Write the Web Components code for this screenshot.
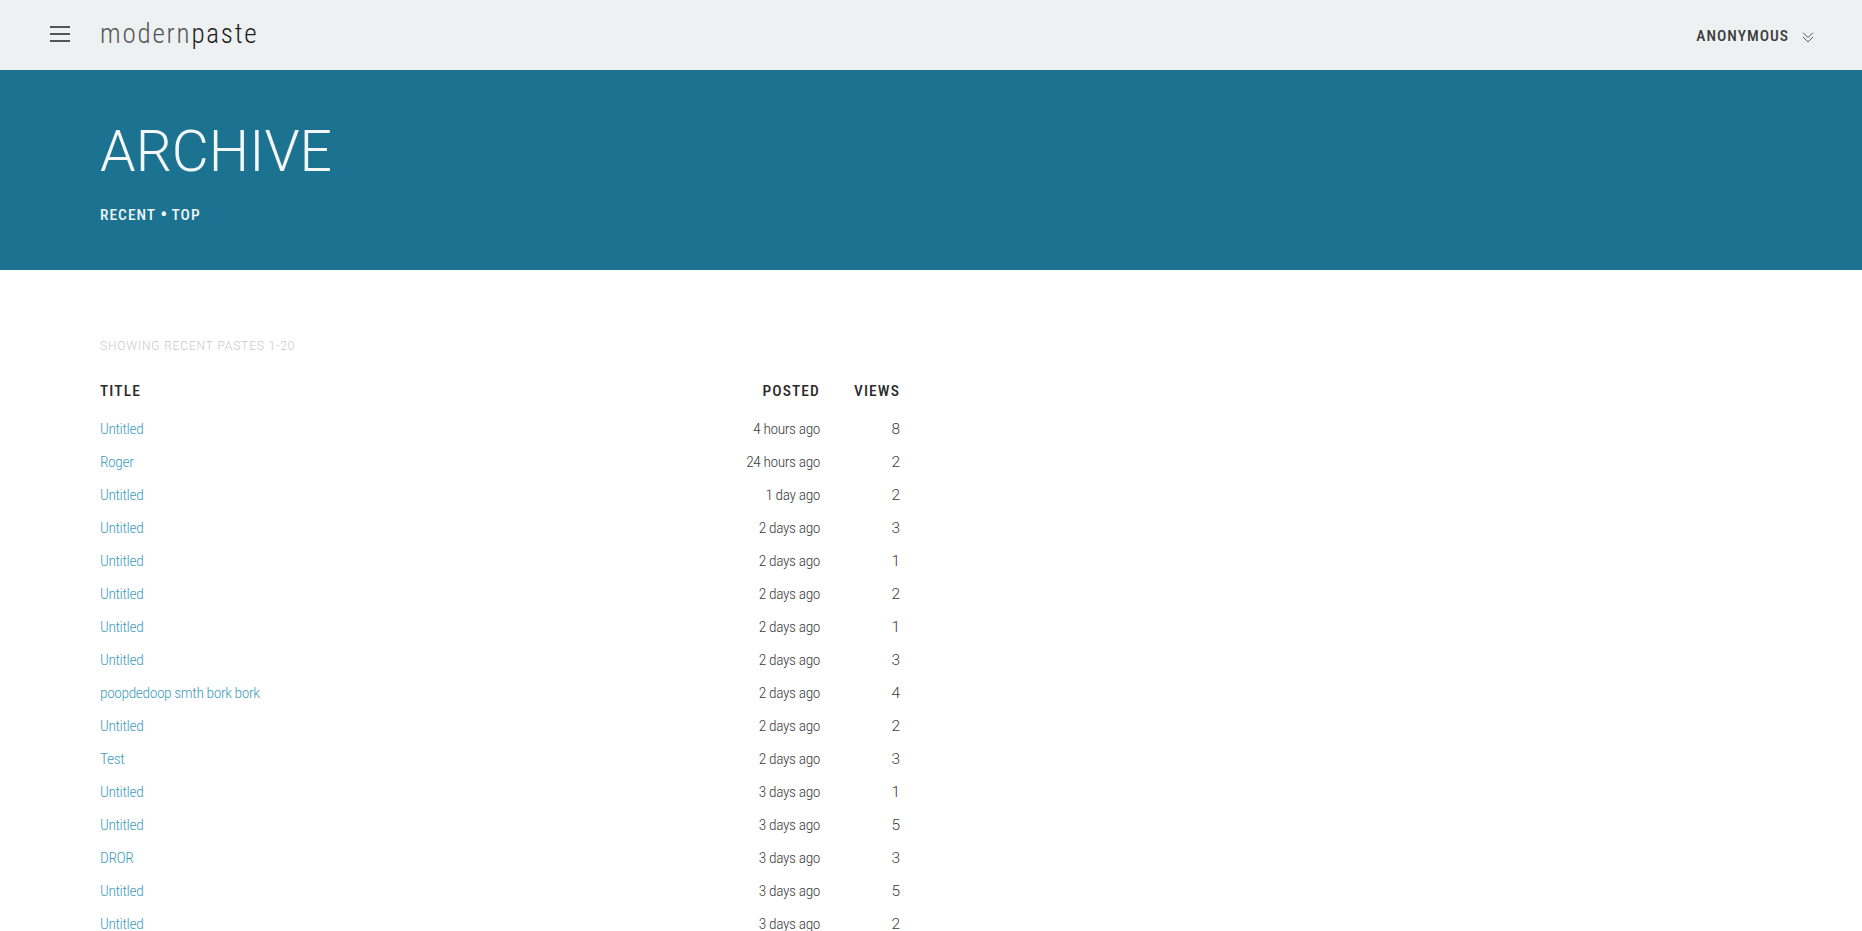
<!DOCTYPE html>
<html>
<head>
<meta charset="utf-8">
<title>ModernPaste</title>
<style>
  html, body { margin: 0; padding: 0; height: 100%; overflow: hidden; background: #fff; }
  body { font-family: Roboto, "Liberation Sans", sans-serif; }
</style>
</head>
<body>
<mp-header></mp-header>
<mp-hero heading="Archive">
  <a href="#">Recent</a> <b>•</b> <a href="#">Top</a>
</mp-hero>
<mp-archive caption="Showing recent pastes 1-20">
  <mp-row title="Untitled" posted="4 hours ago" views="8"></mp-row>
  <mp-row title="Roger" posted="24 hours ago" views="2"></mp-row>
  <mp-row title="Untitled" posted="1 day ago" views="2"></mp-row>
  <mp-row title="Untitled" posted="2 days ago" views="3"></mp-row>
  <mp-row title="Untitled" posted="2 days ago" views="1"></mp-row>
  <mp-row title="Untitled" posted="2 days ago" views="2"></mp-row>
  <mp-row title="Untitled" posted="2 days ago" views="1"></mp-row>
  <mp-row title="Untitled" posted="2 days ago" views="3"></mp-row>
  <mp-row title="poopdedoop smth bork bork" posted="2 days ago" views="4"></mp-row>
  <mp-row title="Untitled" posted="2 days ago" views="2"></mp-row>
  <mp-row title="Test" posted="2 days ago" views="3"></mp-row>
  <mp-row title="Untitled" posted="3 days ago" views="1"></mp-row>
  <mp-row title="Untitled" posted="3 days ago" views="5"></mp-row>
  <mp-row title="DROR" posted="3 days ago" views="3"></mp-row>
  <mp-row title="Untitled" posted="3 days ago" views="5"></mp-row>
  <mp-row title="Untitled" posted="3 days ago" views="2"></mp-row>
</mp-archive>

<script>
/* Barra superior: menu, logo y usuario */
class MpHeader extends HTMLElement {
  constructor() {
    super();
    this.attachShadow({ mode: 'open' });
  }

  connectedCallback() {
    this.shadowRoot.innerHTML = `
      <style>
        :host {
          display: flex;
          align-items: center;
          height: 70px;
          background: #eef1f2;
          color: #333;
          padding: 0 48px 0 50px;
          box-sizing: border-box;
        }
        .menu { display: block; width: 20px; height: 16px; margin-right: 30px; margin-top: -2px; }
        .logo {
          font-size: 27px;
          font-weight: 300;
          letter-spacing: 1.8px;
          color: #555;
          line-height: 1;
          position: relative;
          top: -1px;
          font-stretch: 85%;
        }
        .logo b { font-weight: 300; color: #1c1c1c; }
        .user {
          margin-left: auto;
          display: flex;
          align-items: center;
          font-size: 15.5px;
          font-weight: 500;
          font-stretch: 85%;
          letter-spacing: 1px;
          color: #3c3c3c;
          margin-top: 2px;
        }
        .user svg { display: block; width: 12px; height: 11px; margin-left: 13px; margin-top: 2px; }
      </style>
      <svg class="menu" viewBox="0 0 20 16">
        <path d="M0 1h20M0 8h20M0 15h20" stroke="#222" stroke-width="1.4" fill="none"/>
      </svg>
      <span class="logo">modern<b>paste</b></span>
      <span class="user">ANONYMOUS
        <svg viewBox="0 0 12 11">
          <path d="M1 .6l5 5 5-5M1 5l5 5 5-5" stroke="#333" stroke-width=".8" fill="none"/>
        </svg>
      </span>
    `;
  }
}

/* Banda azul con el titulo de la pagina */
class MpHero extends HTMLElement {
  constructor() {
    super();
    this.attachShadow({ mode: 'open' });
  }

  connectedCallback() {
    const heading = this.getAttribute('heading') || '';
    this.shadowRoot.innerHTML = `
      <style>
        :host {
          display: block;
          height: 200px;
          background: #1c7391;
          color: #f4f7f8;
          padding: 0 100px;
          box-sizing: border-box;
          overflow: hidden;
        }
        h1 {
          margin: 0;
          padding-top: 49px;
          font-size: 57px;
          font-weight: 300;
          line-height: 66px;
          text-transform: uppercase;
        }
        nav {
          margin-top: 19px;
          font-size: 15.5px;
          font-weight: 500;
          font-stretch: 85%;
          letter-spacing: 1px;
          line-height: 20px;
          text-transform: uppercase;
          color: #eef4f6;
        }
        ::slotted(a) { color: inherit; text-decoration: none; }
        ::slotted(b) { font-size: 20px; font-weight: 500; letter-spacing: 0; line-height: 1; vertical-align: -1px; }
      </style>
      <h1>${heading}</h1>
      <nav><slot></slot></nav>
    `;
  }
}

/* Tabla del archivo; las filas llegan por el slot */
class MpArchive extends HTMLElement {
  constructor() {
    super();
    this.attachShadow({ mode: 'open' });
  }

  connectedCallback() {
    const caption = this.getAttribute('caption') || '';
    this.shadowRoot.innerHTML = `
      <style>
        :host {
          display: block;
          width: 800px;
          margin-left: 100px;
          padding-top: 68px;
        }
        .caption {
          font-size: 12px;
          font-weight: 300;
          line-height: 16px;
          letter-spacing: .85px;
          text-transform: uppercase;
          color: #c9c9c9;
          margin-bottom: 21px;
        }
        .head {
          display: grid;
          grid-template-columns: 1fr 120px 80px;
          font-size: 15.5px;
          font-weight: 500;
          font-stretch: 85%;
          line-height: 33px;
          letter-spacing: 1.1px;
          text-transform: uppercase;
          color: #2c2c2c;
          margin-bottom: 5px;
        }
        .head span + span { text-align: right; }
      </style>
      <div class="caption">${caption}</div>
      <div class="head"><span>Title</span><span>Posted</span><span>Views</span></div>
      <slot></slot>
    `;
  }
}

/* Una fila de paste */
class MpRow extends HTMLElement {
  constructor() {
    super();
    this.attachShadow({ mode: 'open' });
  }

  connectedCallback() {
    this.shadowRoot.innerHTML = `
      <style>
        :host {
          display: grid;
          grid-template-columns: 1fr 120px 80px;
          height: 33px;
          line-height: 33px;
          font-size: 15.5px;
          font-weight: 300;
          font-stretch: 80%;
          letter-spacing: -.4px;
          color: #3c3c3c;
        }
        a { color: #3f9dbd; text-decoration: none; }
        .num { text-align: right; }
        .views { font-stretch: 100%; letter-spacing: 0; }
      </style>
      <div><a href="#">${this.getAttribute('title')}</a></div>
      <div class="num">${this.getAttribute('posted')}</div>
      <div class="num views">${this.getAttribute('views')}</div>
    `;
  }
}

customElements.define('mp-header', MpHeader);
customElements.define('mp-hero', MpHero);
customElements.define('mp-archive', MpArchive);
customElements.define('mp-row', MpRow);
</script>
</body>
</html>
